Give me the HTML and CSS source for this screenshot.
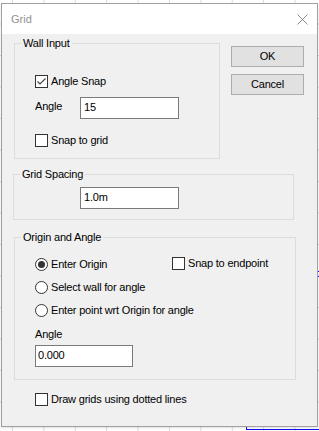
FILE: index.html
```html
<!DOCTYPE html>
<html lang="en">
<head>
  <meta charset="UTF-8" />
  <title>Grid</title>
  <link rel="stylesheet" href="styles.css">
</head>
<body>

  <div class="desk">
    <span class="shape-edge edge-bottom"></span>
    <span class="shape-edge edge-left"></span>
    <span class="shape-edge edge-tick1"></span>
    <span class="shape-edge edge-tick2"></span>

    <div class="dialog">
      <div class="titlebar">
        <span class="title">Grid</span>
        <svg class="close" width="11" height="11" viewBox="0 0 11 11">
          <path d="M0.5 0.5 L10.5 10.5 M10.5 0.5 L0.5 10.5" stroke="#8a8a8a" stroke-width="1" fill="none"/>
        </svg>
      </div>

      <div class="content">
        <div class="top-row">
          <div class="group wall">
            <span class="group-title">Wall Input</span>
            <label class="opt">
              <span class="box">
                <svg width="11" height="11" viewBox="0 0 11 11">
                  <path d="M1.5 5.5 L4 8 L9.5 2.5" stroke="#444" stroke-width="1.2" fill="none"/>
                </svg>
              </span>
              <span class="opt-text">Angle Snap</span>
            </label>
            <div class="field">
              <span class="field-label">Angle</span>
              <input class="textbox" type="text" value="15">
            </div>
            <label class="opt snap-grid">
              <span class="box"></span>
              <span class="opt-text">Snap to grid</span>
            </label>
          </div>

          <div class="buttons">
            <button class="btn">OK</button>
            <button class="btn">Cancel</button>
          </div>
        </div>

        <div class="group spacing">
          <span class="group-title">Grid Spacing</span>
          <input class="textbox" type="text" value="1.0m">
        </div>

        <div class="group origin">
          <span class="group-title">Origin and Angle</span>
          <div class="origin-first">
            <label class="opt enter-origin">
              <span class="radio on"></span>
              <span class="opt-text">Enter Origin</span>
            </label>
            <label class="opt endpoint">
              <span class="box"></span>
              <span class="opt-text">Snap to endpoint</span>
            </label>
          </div>
          <label class="opt radio-row">
            <span class="radio"></span>
            <span class="opt-text">Select wall for angle</span>
          </label>
          <label class="opt radio-row">
            <span class="radio"></span>
            <span class="opt-text">Enter point wrt Origin for angle</span>
          </label>
          <span class="origin-label">Angle</span>
          <input class="textbox origin-angle" type="text" value="0.000">
        </div>

        <label class="opt dotted">
          <span class="box"></span>
          <span class="opt-text">Draw grids using dotted lines</span>
        </label>
      </div>
    </div>
  </div>

</body>
</html>
```

FILE: styles.css
```css
* {
  margin: 0;
  padding: 0;
  box-sizing: border-box;
}

body {
  width: 319px;
  height: 431px;
  overflow: hidden;
  font-family: "Liberation Sans", Arial, sans-serif;
  font-size: 11px;
  letter-spacing: -0.2px;
  color: #000;
  background-color: #fff;
  background-image:
    linear-gradient(to right, #d8d8ea 1px, transparent 1px),
    linear-gradient(to bottom, #d8d8ea 1px, transparent 1px);
  background-size: 31.4px 31.5px;
  background-position: 12px 23.5px;
}

.desk {
  position: relative;
  width: 319px;
  height: 431px;
  padding: 3px 0 0 1px;
}

/* blue drawing lines behind the dialog */
.shape-edge {
  position: absolute;
  background: #1010f0;
}

.edge-bottom {
  left: 246px;
  top: 429px;
  width: 73px;
  height: 1px;
}

.edge-left {
  left: 246px;
  top: 426px;
  width: 1px;
  height: 4px;
}

.edge-tick1 {
  left: 318px;
  top: 271px;
  width: 1px;
  height: 1px;
}

.edge-tick2 {
  left: 318px;
  top: 276px;
  width: 1px;
  height: 1px;
}

/* dialog window */
.dialog {
  position: relative;
  width: 317px;
  height: 424px;
  border: 1px solid #a0a0a0;
  background: #f0f0f0;
  box-shadow: 0 1px 2px rgba(0, 0, 0, 0.12);
  display: flex;
  flex-direction: column;
}

.titlebar {
  height: 30px;
  background: #fff;
  display: flex;
  align-items: center;
  padding: 0 9px;
}

.title {
  color: #929292;
  font-size: 11px;
  letter-spacing: 0;
}

.close {
  margin-left: auto;
  margin-right: 0;
  display: block;
}

.content {
  flex: 1;
  padding: 9px 0 0 12px;
}

.top-row {
  display: flex;
  align-items: flex-start;
}

/* group boxes */
.group {
  position: relative;
  border: 1px solid #dcdcdc;
}

.group-title {
  position: absolute;
  top: -6px;
  left: 6px;
  padding: 0 2px;
  line-height: 11px;
  background: #f0f0f0;
}

.wall {
  width: 206px;
  height: 116px;
  padding: 31px 0 0 20px;
}

.spacing {
  width: 281px;
  height: 46px;
  margin: 15px 0 0 -1px;
  padding: 12px 0 0 66px;
}

.origin {
  width: 282px;
  height: 143px;
  margin-top: 17px;
  padding: 20px 0 0 20px;
}

/* checkbox / radio rows */
.opt {
  display: flex;
  align-items: flex-start;
  height: 13px;
}

.opt-text {
  line-height: 11px;
  margin-top: 1px;
  margin-left: 3px;
  white-space: nowrap;
}

.box {
  width: 13px;
  height: 13px;
  flex: none;
  border: 1px solid #333;
  background: #fff;
  display: flex;
  align-items: center;
  justify-content: center;
}

.radio {
  width: 13px;
  height: 13px;
  flex: none;
  border: 1px solid #333;
  border-radius: 50%;
  background: #fff;
  display: flex;
  align-items: center;
  justify-content: center;
}

.radio.on::before {
  content: "";
  width: 7px;
  height: 7px;
  border-radius: 50%;
  background: #333;
}

.snap-grid {
  margin-top: 15px;
}

.field {
  display: flex;
  align-items: flex-start;
  margin-top: 9px;
}

.field-label {
  width: 45px;
  line-height: 11px;
  margin-top: 4px;
}

.textbox {
  width: 99px;
  height: 22px;
  border: 1px solid #7a7a7a;
  background: #fff;
  padding: 0 3px 2px;
  font-family: "Liberation Sans", Arial, sans-serif;
  font-size: 11px;
  letter-spacing: -0.2px;
  color: #000;
  outline: none;
  display: block;
}

.origin-first {
  display: flex;
  align-items: flex-start;
}

.enter-origin {
  width: 137px;
}

.endpoint {
  margin-top: -1px;
}

.radio-row {
  margin-top: 10px;
}

.origin-label {
  display: block;
  line-height: 11px;
  margin-top: 12px;
}

.origin-angle {
  width: 98px;
  margin-top: 5px;
  padding-left: 2px;
}

.dotted {
  margin: 13px 0 0 21px;
}

/* buttons */
.buttons {
  display: flex;
  flex-direction: column;
  gap: 7px;
  margin: 3px 0 0 11px;
}

.btn {
  width: 73px;
  height: 21px;
  background: #e1e1e1;
  border: 1px solid #adadad;
  font-family: "Liberation Sans", Arial, sans-serif;
  font-size: 11px;
  letter-spacing: -0.2px;
  line-height: 11px;
  color: #000;
}
```
